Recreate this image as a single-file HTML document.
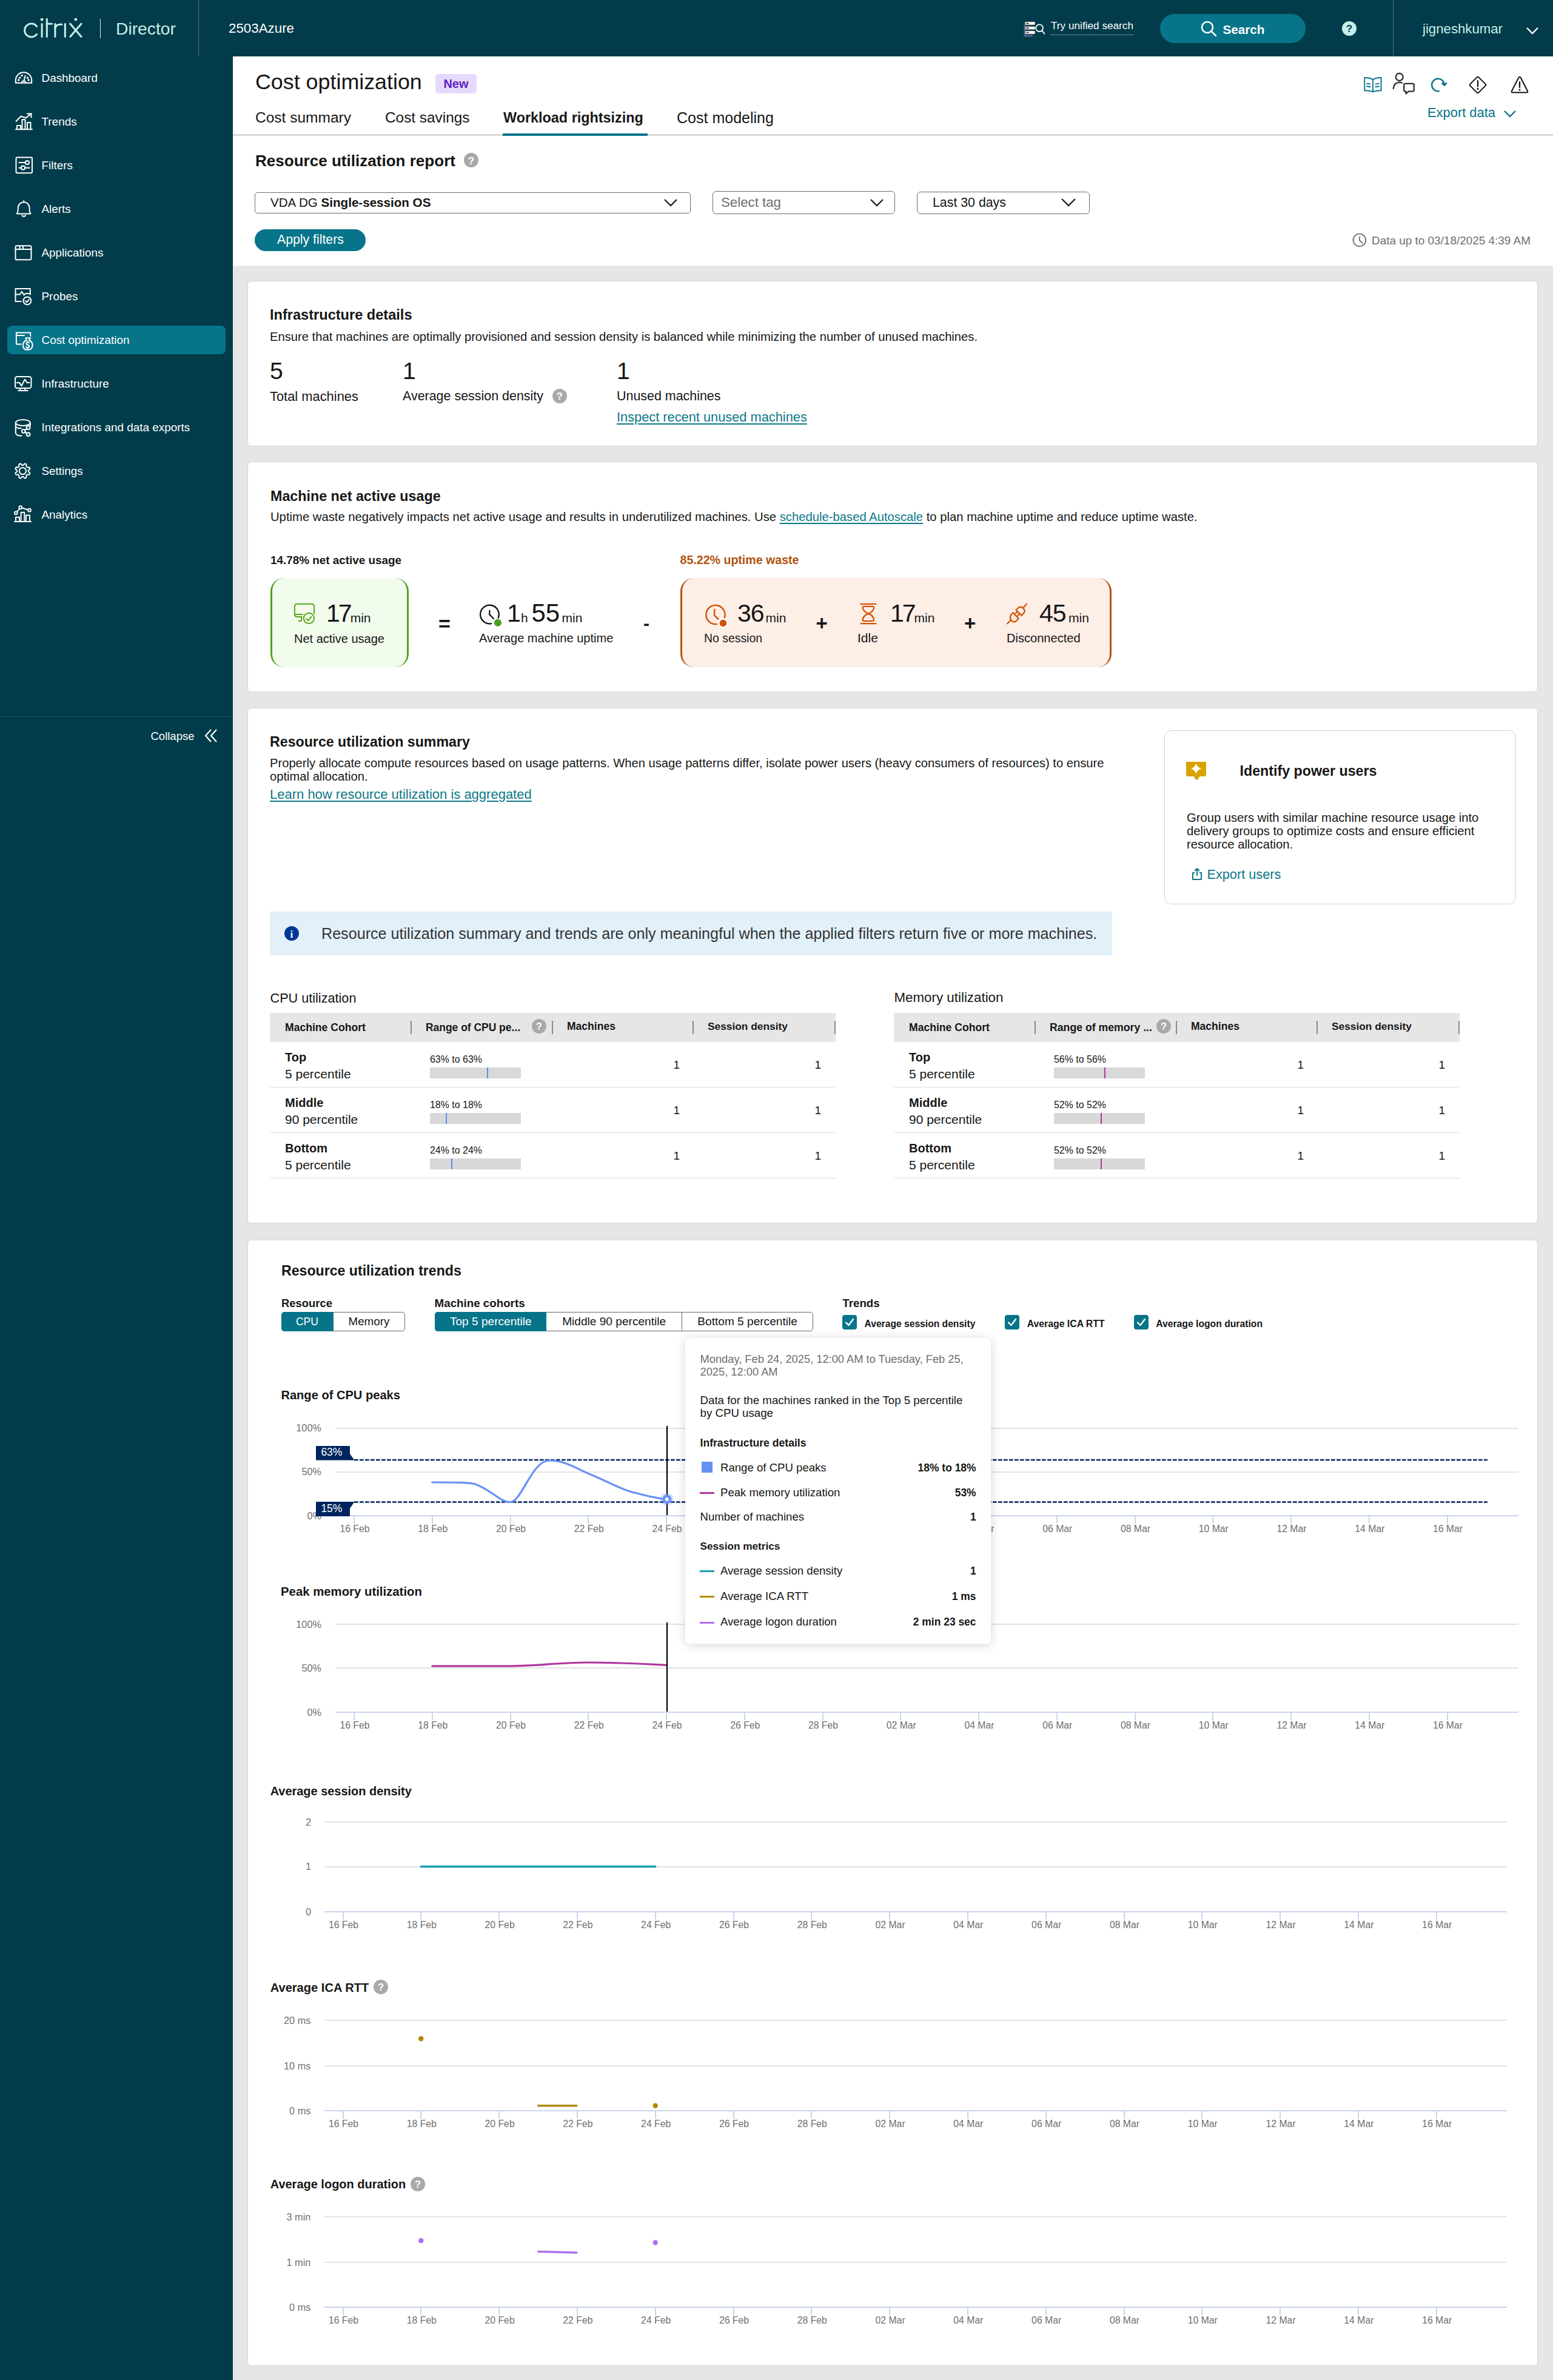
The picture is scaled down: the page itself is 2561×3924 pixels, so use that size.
<!DOCTYPE html>
<html><head><meta charset="utf-8"><title>Cost optimization</title>
<style>
html,body{margin:0;padding:0;}
body{width:2561px;height:3924px;position:relative;overflow:hidden;background:#e6e6e6;font-family:"Liberation Sans",sans-serif;}
.t{position:absolute;white-space:nowrap;line-height:1;}
.b{position:absolute;box-sizing:border-box;}
svg.b{overflow:visible;}
</style></head><body>
<div class="b" style="left:0.0px;top:0.0px;width:2561.0px;height:93.0px;background:#023c4a"></div>
<svg class="b" style="left:40.0px;top:28.0px;" width="100" height="40" viewBox="0 0 100 40"><g fill="none" stroke="#c6efe9" stroke-width="3" stroke-linecap="round"><path d="M20.6 15.6 A11 11 0 1 0 20.6 28.4"/><path d="M29.1 11.5 V32.4"/><path d="M37.3 3.2 V32.4"/><path d="M37.3 11.3 H45.5"/><path d="M50.9 11.5 V32.4"/><path d="M50.9 19 Q52 11.5 62 12.3"/><path d="M67.3 11.5 V32.4"/><path d="M75.8 11.2 L94 32.4"/><path d="M94 11.2 L75.8 32.4"/></g><circle cx="29.1" cy="4.2" r="2.4" fill="#c6efe9"/><circle cx="84.9" cy="4.2" r="2.4" fill="#c6efe9"/></svg>
<div class="b" style="left:164.8px;top:31.0px;width:1.6px;height:32.0px;background:#c6efe9"></div>
<div class="t " style="left:191.0px;top:32.8px;font-size:28.28px;font-weight:400;color:#c6efe9;">Director</div>
<div class="b" style="left:327.0px;top:0.0px;width:1.0px;height:93.0px;background:#4c6f78"></div>
<div class="t " style="left:377.0px;top:35.6px;font-size:22.33px;font-weight:400;color:#ffffff;">2503Azure</div>
<svg class="b" style="left:1688.0px;top:33.0px;" width="38" height="28" viewBox="0 0 38 28"><path d="M0.5 4.5 H3 V24.5 H15 V27.5 H0.5 Z" fill="#56689a"/><g fill="#fff" stroke="#1a1a1a" stroke-width="0.6"><rect x="2.3" y="2.8" width="16.8" height="5.4" rx="1.2"/><rect x="2.3" y="10.4" width="16.8" height="5.4" rx="1.2"/><rect x="2.3" y="17.8" width="16.8" height="5.4" rx="1.2"/></g><g fill="#111"><rect x="4.2" y="4.7" width="4.5" height="1.6" rx="0.8"/><rect x="4.2" y="12.3" width="4.5" height="1.6" rx="0.8"/><rect x="4.2" y="19.7" width="4.5" height="1.6" rx="0.8"/></g><g fill="none" stroke="#fff" stroke-width="1.8"><circle cx="26.1" cy="13.2" r="5.8"/><path d="M30.2 17.4 L34.6 22.9" stroke-linecap="round"/></g></svg>
<div class="t " style="left:1733.0px;top:33.9px;font-size:17.19px;font-weight:400;color:#ffffff;">Try unified search</div>
<div class="b" style="left:1733.0px;top:56.0px;width:136.0px;height:2.0px;border-bottom:1.5px dotted #c9d6da"></div>
<div class="b" style="left:1913.0px;top:23.0px;width:240.0px;height:48.0px;background:#077489;border-radius:24px"></div>
<svg class="b" style="left:1980.0px;top:34.0px;" width="28" height="28" viewBox="0 0 28 28"><g fill="none" stroke="#fff" stroke-width="2.6"><circle cx="11" cy="11" r="9"/><path d="M17.5 17.5 L25 25" stroke-linecap="round"/></g></svg>
<div class="t " style="left:2016.5px;top:38.5px;font-size:20.69px;font-weight:700;color:#ffffff;">Search</div>
<div class="b" style="left:2213.0px;top:35.0px;width:24.0px;height:24.0px;background:#c6efe9;border-radius:50%"></div>
<div class="t " style="left:2219.8px;top:39.1px;font-size:17.00px;font-weight:700;color:#023c4a;">?</div>
<div class="b" style="left:2297.0px;top:0.0px;width:1.0px;height:93.0px;background:#4c6f78"></div>
<div class="t " style="left:2346.0px;top:36.7px;font-size:22.19px;font-weight:400;color:#c6efe9;">jigneshkumar</div>
<svg class="b" style="left:2516.0px;top:44.0px;" width="22" height="14" viewBox="0 0 22 14"><path d="M2 2 L11 11 L20 2" fill="none" stroke="#fff" stroke-width="2.4"/></svg>
<div class="b" style="left:0.0px;top:93.0px;width:384.0px;height:3831.0px;background:#023c4a"></div>
<div class="b" style="left:12.0px;top:537.0px;width:360.0px;height:47.0px;background:#077489;border-radius:8px"></div>
<svg class="b" style="left:24.0px;top:114.0px;" width="30" height="30" viewBox="0 0 30 30"><g fill="none" stroke="#fff" stroke-width="2" stroke-linecap="round" stroke-linejoin="round"><path d="M1.8 22.8 V18.5 A13.2 13.2 0 0 1 28.2 18.5 V22.8 Z"/><path d="M15.2 20 L17.6 10.7"/><path d="M11.8 22.8 A3.4 3.4 0 0 1 18.6 22.8"/></g><g fill="#fff"><circle cx="6.6" cy="18" r="1.7"/><circle cx="8.6" cy="14.2" r="1.7"/><circle cx="12.1" cy="10.5" r="1.7"/><circle cx="21.3" cy="14.2" r="1.7"/><circle cx="23.1" cy="18" r="1.7"/></g></svg>
<div class="t " style="left:68.5px;top:120.3px;font-size:18.90px;font-weight:400;color:#ffffff;">Dashboard</div>
<svg class="b" style="left:24.0px;top:186.0px;" width="30" height="30" viewBox="0 0 30 30"><g fill="none" stroke="#fff" stroke-width="2" stroke-linecap="round" stroke-linejoin="round"><path d="M2 27.2 H28.9"/><path d="M4 26.5 V21 H10 V26.5"/><path d="M12.5 26.5 V11.2 H17.5 V26.5"/><path d="M21 26.5 V16.1 H26.5 V26.5"/><path d="M2.5 14 L10.5 5.8 L18.9 8.3 L27.3 1.6"/><path d="M21 1.6 H27.5 V7.5"/></g></svg>
<div class="t " style="left:68.5px;top:192.3px;font-size:18.90px;font-weight:400;color:#ffffff;">Trends</div>
<svg class="b" style="left:24.0px;top:258.0px;" width="30" height="30" viewBox="0 0 30 30"><g fill="none" stroke="#fff" stroke-width="2" stroke-linecap="round" stroke-linejoin="round"><rect x="2.5" y="1.5" width="26.5" height="25.8" rx="1.8"/><path d="M7.4 10.1 H17.6"/><path d="M7.4 18.7 H10.7 M17.3 18.7 H24.6"/></g><g fill="none" stroke="#fff" stroke-width="2"><circle cx="20.9" cy="10.1" r="3.1"/><circle cx="14" cy="18.7" r="3.1"/></g></svg>
<div class="t " style="left:68.5px;top:264.3px;font-size:18.90px;font-weight:400;color:#ffffff;">Filters</div>
<svg class="b" style="left:24.0px;top:330.0px;" width="30" height="30" viewBox="0 0 30 30"><g fill="none" stroke="#fff" stroke-width="2" stroke-linecap="round" stroke-linejoin="round"><path d="M3.9 22.4 Q6 19 5.8 14.6 V12.6 A9.4 9.4 0 0 1 24.6 12.6 V14.6 Q24.4 19 26.5 22.4 Z"/><path d="M15.2 1.2 V3.2"/><path d="M12.3 25.2 Q15.2 28.3 18.1 25.2"/></g></svg>
<div class="t " style="left:68.5px;top:336.3px;font-size:18.90px;font-weight:400;color:#ffffff;">Alerts</div>
<svg class="b" style="left:24.0px;top:402.0px;" width="30" height="30" viewBox="0 0 30 30"><g fill="none" stroke="#fff" stroke-width="2" stroke-linecap="round" stroke-linejoin="round"><rect x="1.5" y="3.2" width="26" height="23" rx="2"/><path d="M1.5 9 H27.5"/><path d="M8.6 3.5 V9 M14 3.5 V9"/></g></svg>
<div class="t " style="left:68.5px;top:408.3px;font-size:18.90px;font-weight:400;color:#ffffff;">Applications</div>
<svg class="b" style="left:24.0px;top:474.0px;" width="30" height="30" viewBox="0 0 30 30"><g fill="none" stroke="#fff" stroke-width="2" stroke-linecap="round" stroke-linejoin="round"><path d="M10.7 23 H1.5 V2.1 H25.8 V11.6"/><path d="M1.8 11.6 H8.6 L11.9 6.7 L15.6 12.4 L18 9.9 H25.8"/><circle cx="20.9" cy="21.8" r="6.4"/><path d="M18 22 L20.2 24.2 L24 19.8"/></g></svg>
<div class="t " style="left:68.5px;top:480.3px;font-size:18.90px;font-weight:400;color:#ffffff;">Probes</div>
<svg class="b" style="left:24.0px;top:546.0px;" width="30" height="30" viewBox="0 0 30 30"><g fill="none" stroke="#fff" stroke-width="2" stroke-linecap="round" stroke-linejoin="round"><path d="M26.2 7.9 V2.5 H2.9 V21.4 H10.7"/><path d="M2.9 7 H16"/><path d="M18.4 11.2 H26.4 L23.8 14.5 Q30 17.8 29.6 23.6 Q29 30.8 21.7 30.8 Q14.2 30.8 13.8 23.6 Q13.6 17.8 19.6 14.5 Z"/><path d="M24 19.2 Q22.6 17.9 21 18.2 Q19.3 18.7 19.4 20.5 Q19.6 22 21.7 22.7 Q24.1 23.5 24 25.3 Q23.8 27.1 21.6 27.1 Q19.9 27 19 25.8"/><path d="M21.7 16.6 V18.2 M21.7 27.1 V28.7"/></g></svg>
<div class="t " style="left:68.5px;top:552.3px;font-size:18.90px;font-weight:400;color:#ffffff;">Cost optimization</div>
<svg class="b" style="left:24.0px;top:618.0px;" width="30" height="30" viewBox="0 0 30 30"><g fill="none" stroke="#fff" stroke-width="2" stroke-linecap="round" stroke-linejoin="round"><rect x="1" y="3" width="26.5" height="19" rx="3.5"/><path d="M3.7 12.9 H8 L11.5 18.2 L16.8 7.6 L20.7 12.9 H24.5"/><path d="M9.4 22.5 V26 M17.2 22.5 V26 M6.2 26 H21.7"/></g></svg>
<div class="t " style="left:68.5px;top:624.3px;font-size:18.90px;font-weight:400;color:#ffffff;">Infrastructure</div>
<svg class="b" style="left:24.0px;top:690.0px;" width="30" height="30" viewBox="0 0 30 30"><g fill="none" stroke="#fff" stroke-width="2" stroke-linecap="round" stroke-linejoin="round"><ellipse cx="13.8" cy="6.9" rx="12" ry="5"/><path d="M1.8 6.9 V23.6 Q1.8 28.6 11.5 28.6"/><path d="M25.8 6.9 V12"/><path d="M1.8 12 Q1.8 16.3 10.7 16.3"/><path d="M17.2 19.6 L20.3 16.4 M17.2 22 L20.3 24.9"/></g><g fill="none" stroke="#fff" stroke-width="2"><circle cx="22.6" cy="15.1" r="2.9"/><circle cx="14.8" cy="20.8" r="2.9"/><circle cx="22.6" cy="26.1" r="2.9"/></g></svg>
<div class="t " style="left:68.5px;top:696.3px;font-size:18.90px;font-weight:400;color:#ffffff;">Integrations and data exports</div>
<svg class="b" style="left:24.0px;top:762.0px;" width="30" height="30" viewBox="0 0 30 30"><g fill="none" stroke="#fff" stroke-width="2" stroke-linecap="round" stroke-linejoin="round"><path d="M22.80 14.50 L22.80 14.13 L22.82 13.76 L22.92 13.37 L23.31 12.93 L24.19 12.35 L25.04 11.71 L25.34 11.13 L25.33 10.62 L25.21 10.14 L25.04 9.68 L24.83 9.23 L24.58 8.80 L24.23 8.44 L23.61 8.25 L22.55 8.39 L21.51 8.60 L20.93 8.56 L20.59 8.36 L20.31 8.11 L20.05 7.85 L19.79 7.59 L19.54 7.31 L19.34 6.97 L19.30 6.39 L19.51 5.35 L19.65 4.29 L19.46 3.67 L19.10 3.32 L18.67 3.07 L18.22 2.86 L17.76 2.69 L17.28 2.57 L16.77 2.56 L16.19 2.86 L15.55 3.71 L14.97 4.59 L14.53 4.98 L14.14 5.08 L13.77 5.10 L13.40 5.10 L13.03 5.10 L12.66 5.08 L12.27 4.98 L11.83 4.59 L11.25 3.71 L10.61 2.86 L10.03 2.56 L9.52 2.57 L9.04 2.69 L8.58 2.86 L8.13 3.07 L7.70 3.32 L7.34 3.67 L7.15 4.29 L7.29 5.35 L7.50 6.39 L7.46 6.97 L7.26 7.31 L7.01 7.59 L6.75 7.85 L6.49 8.11 L6.21 8.36 L5.87 8.56 L5.29 8.60 L4.25 8.39 L3.19 8.25 L2.57 8.44 L2.22 8.80 L1.97 9.23 L1.76 9.68 L1.59 10.14 L1.47 10.62 L1.46 11.13 L1.76 11.71 L2.61 12.35 L3.49 12.93 L3.88 13.37 L3.98 13.76 L4.00 14.13 L4.00 14.50 L4.00 14.87 L3.98 15.24 L3.88 15.63 L3.49 16.07 L2.61 16.65 L1.76 17.29 L1.46 17.87 L1.47 18.38 L1.59 18.86 L1.76 19.32 L1.97 19.77 L2.22 20.20 L2.57 20.56 L3.19 20.75 L4.25 20.61 L5.29 20.40 L5.87 20.44 L6.21 20.64 L6.49 20.89 L6.75 21.15 L7.01 21.41 L7.26 21.69 L7.46 22.03 L7.50 22.61 L7.29 23.65 L7.15 24.71 L7.34 25.33 L7.70 25.68 L8.13 25.93 L8.58 26.14 L9.04 26.31 L9.52 26.43 L10.03 26.44 L10.61 26.14 L11.25 25.29 L11.83 24.41 L12.27 24.02 L12.66 23.92 L13.03 23.90 L13.40 23.90 L13.77 23.90 L14.14 23.92 L14.53 24.02 L14.97 24.41 L15.55 25.29 L16.19 26.14 L16.77 26.44 L17.28 26.43 L17.76 26.31 L18.22 26.14 L18.67 25.93 L19.10 25.68 L19.46 25.33 L19.65 24.71 L19.51 23.65 L19.30 22.61 L19.34 22.03 L19.54 21.69 L19.79 21.41 L20.05 21.15 L20.31 20.89 L20.59 20.64 L20.93 20.44 L21.51 20.40 L22.55 20.61 L23.61 20.75 L24.23 20.56 L24.58 20.20 L24.83 19.77 L25.04 19.32 L25.21 18.86 L25.33 18.38 L25.34 17.87 L25.04 17.29 L24.19 16.65 L23.31 16.07 L22.92 15.63 L22.82 15.24 L22.80 14.87 Z"/><circle cx="13.4" cy="14.5" r="5.6"/></g></svg>
<div class="t " style="left:68.5px;top:768.3px;font-size:18.90px;font-weight:400;color:#ffffff;">Settings</div>
<svg class="b" style="left:24.0px;top:834.0px;" width="30" height="30" viewBox="0 0 30 30"><g fill="none" stroke="#fff" stroke-width="2" stroke-linecap="round" stroke-linejoin="round"><path d="M-0.2 25.9 H27"/><path d="M2 25.5 V18.8 H8 V25.5"/><path d="M10.6 25.5 V10.8 H16.3 V25.5"/><path d="M19 25.5 V15.5 H25 V25.5"/><path d="M2.3 11.8 L9.9 2.7 L24.5 7.2"/></g><g fill="#023c4a" stroke="#fff" stroke-width="2"><circle cx="2.3" cy="11.8" r="2.4"/><circle cx="9.9" cy="2.7" r="2.4"/><circle cx="24.5" cy="7.2" r="2.4"/></g></svg>
<div class="t " style="left:68.5px;top:840.3px;font-size:18.90px;font-weight:400;color:#ffffff;">Analytics</div>
<div class="b" style="left:0.0px;top:1180.5px;width:384.0px;height:1.5px;background:#0b5665"></div>
<div class="t " style="left:248.5px;top:1204.8px;font-size:18.50px;font-weight:400;color:#ffffff;">Collapse</div>
<svg class="b" style="left:337.0px;top:1201.0px;" width="22" height="24" viewBox="0 0 22 24"><g fill="none" stroke="#fff" stroke-width="2.2"><path d="M11 2 L2 12 L11 22"/><path d="M20 2 L11 12 L20 22"/></g></svg>
<div class="b" style="left:384.0px;top:93.0px;width:2177.0px;height:345.0px;background:#fff"></div>
<div class="t " style="left:421.0px;top:117.6px;font-size:35.85px;font-weight:400;color:#161616;">Cost optimization</div>
<div class="b" style="left:718.0px;top:122.0px;width:68.0px;height:32.0px;background:#e6dafc;border-radius:5px"></div>
<div class="t " style="left:731.4px;top:128.1px;font-size:20.00px;font-weight:700;color:#5f1fc4;">New</div>
<div class="b" style="left:384.0px;top:221.0px;width:2177.0px;height:3.0px;background:#d9d9d9"></div>
<div class="t " style="left:421.0px;top:182.2px;font-size:24.51px;font-weight:400;color:#161616;">Cost summary</div>
<div class="t " style="left:635.0px;top:182.4px;font-size:24.37px;font-weight:400;color:#161616;">Cost savings</div>
<div class="t " style="left:830.0px;top:183.2px;font-size:23.40px;font-weight:700;color:#161616;">Workload rightsizing</div>
<div class="t " style="left:1116.0px;top:181.8px;font-size:25.03px;font-weight:400;color:#161616;">Cost modeling</div>
<div class="b" style="left:829.0px;top:220.0px;width:239.0px;height:4.0px;background:#077489"></div>
<svg class="b" style="left:2249.0px;top:126.0px;" width="30" height="28" viewBox="0 0 30 28"><g fill="none" stroke="#077489" stroke-width="1.9" stroke-linejoin="round" stroke-linecap="round"><path d="M1.3 2 Q8 1.6 15 4.8 Q22 1.6 28.6 2 V23.2 Q22 23 15 25.2 Q8 23 1.3 23.2 Z"/><path d="M15 4.8 V25.2"/><path d="M4.9 11.6 L10.6 12.6 M4.9 16.3 L10.6 17.3 M19.4 12.6 L25.1 11.6 M19.4 17.3 L25.1 16.3"/></g></svg>
<svg class="b" style="left:2295.0px;top:119.0px;" width="40" height="38" viewBox="0 0 40 38"><g fill="none" stroke="#2e2e2e" stroke-width="2.3" stroke-linejoin="round" stroke-linecap="round"><circle cx="12.7" cy="8" r="6"/><path d="M2.7 27 Q4 16.8 13 16.8 Q16 16.8 17.1 17.5"/><path d="M22.2 18.8 H34.7 Q36.7 18.8 36.7 20.8 V29.7 Q36.7 31.7 34.7 31.7 H28 L23.5 35.3 V31.7 Q20.2 31.7 20.2 29.7 V20.8 Q20.2 18.8 22.2 18.8 Z"/></g></svg>
<svg class="b" style="left:2360.0px;top:128.0px;" width="28" height="25" viewBox="0 0 28 25"><g fill="none" stroke="#077489" stroke-width="2.4" stroke-linecap="round" stroke-linejoin="round"><path d="M13 22.2 A10.3 10.3 0 1 1 21.7 11.8"/><path d="M18.2 9.2 L21.7 12.8 L25.2 9.2"/></g></svg>
<svg class="b" style="left:2422.0px;top:125.0px;" width="30" height="30" viewBox="0 0 30 30"><g fill="none" stroke="#111" stroke-width="2" stroke-linejoin="round"><path d="M13.6 2.4 Q15 1 16.4 2.4 L27.6 13.6 Q29 15 27.6 16.4 L16.4 27.6 Q15 29 13.6 27.6 L2.4 16.4 Q1 15 2.4 13.6 Z"/></g><path d="M15 8 V17.5" stroke="#111" stroke-width="2.2" stroke-linecap="round"/><circle cx="15" cy="21.6" r="1.5" fill="#111"/></svg>
<svg class="b" style="left:2491.0px;top:125.0px;" width="30" height="30" viewBox="0 0 30 30"><g fill="none" stroke="#111" stroke-width="2" stroke-linejoin="round"><path d="M13.3 3 Q15 0.5 16.7 3 L28 25 Q29 27.6 26.2 27.6 H3.8 Q1 27.6 2 25 Z"/></g><path d="M15 10 V19" stroke="#111" stroke-width="2.2" stroke-linecap="round"/><circle cx="15" cy="23" r="1.5" fill="#111"/></svg>
<div class="t " style="left:2354.0px;top:174.5px;font-size:21.90px;font-weight:400;color:#077489;">Export data</div>
<svg class="b" style="left:2479.0px;top:181.0px;" width="22" height="13" viewBox="0 0 22 13"><path d="M2 2 L11 11 L20 2" fill="none" stroke="#077489" stroke-width="2.4"/></svg>
<div class="t " style="left:421.0px;top:251.9px;font-size:26.05px;font-weight:700;color:#161616;">Resource utilization report</div>
<div class="b" style="left:765.0px;top:252.0px;width:24.0px;height:24.0px;background:#a8a8a8;border-radius:50%"></div>
<div class="t " style="left:771.8px;top:256.6px;font-size:17.00px;font-weight:700;color:#fff;">?</div>
<div class="b" style="left:420.0px;top:317.0px;width:719.0px;height:35.0px;border:1.5px solid #6e6e6e;border-radius:5px;background:#fff"></div>
<div class="t" style="left:446px;top:323.6px;font-size:20.6px;color:#161616">VDA DG <b style="font-weight:700">Single-session OS</b></div>
<svg class="b" style="left:1094.0px;top:327.0px;" width="24" height="14" viewBox="0 0 24 14"><path d="M2 2 L12 12 L22 2" fill="none" stroke="#222" stroke-width="2.4"/></svg>
<div class="b" style="left:1175.0px;top:315.0px;width:301.0px;height:38.0px;border:1.5px solid #6e6e6e;border-radius:6px;background:#fff"></div>
<div class="t " style="left:1189.0px;top:323.2px;font-size:22.26px;font-weight:400;color:#6f6f6f;">Select tag</div>
<svg class="b" style="left:1434.0px;top:327.0px;" width="24" height="14" viewBox="0 0 24 14"><path d="M2 2 L12 12 L22 2" fill="none" stroke="#222" stroke-width="2.4"/></svg>
<div class="b" style="left:1512.0px;top:316.0px;width:285.0px;height:37.0px;border:1.5px solid #6e6e6e;border-radius:6px;background:#fff"></div>
<div class="t " style="left:1538.0px;top:323.9px;font-size:21.34px;font-weight:400;color:#161616;">Last 30 days</div>
<svg class="b" style="left:1749.0px;top:326.0px;" width="26" height="15" viewBox="0 0 26 15"><path d="M2 2 L13 13 L24 2" fill="none" stroke="#222" stroke-width="2.4"/></svg>
<div class="b" style="left:420.0px;top:378.0px;width:183.0px;height:36.0px;background:#077489;border-radius:18px"></div>
<div class="t " style="left:457.0px;top:385.0px;font-size:21.28px;font-weight:400;color:#fff;">Apply filters</div>
<svg class="b" style="left:2229.0px;top:384.0px;" width="26" height="26" viewBox="0 0 26 26"><g fill="none" stroke="#737373" stroke-width="1.9" stroke-linecap="round"><circle cx="12.9" cy="11.9" r="10.3"/><path d="M12.9 6.6 V12 L17.7 16.9"/></g></svg>
<div class="t " style="left:2262.0px;top:388.0px;font-size:18.93px;font-weight:400;color:#6f6f6f;">Data up to 03/18/2025 4:39 AM</div>
<div class="b" style="left:408.0px;top:463.0px;width:2128.0px;height:273.0px;background:#fff;border:1px solid #d6d6d6;border-radius:6px"></div>
<div class="t " style="left:445.0px;top:507.6px;font-size:23.58px;font-weight:700;color:#161616;">Infrastructure details</div>
<div class="t " style="left:445.0px;top:544.6px;font-size:20.21px;font-weight:400;color:#161616;">Ensure that machines are optimally provisioned and session density is balanced while minimizing the number of unused machines.</div>
<div class="t " style="left:445.0px;top:592.0px;font-size:39.00px;font-weight:400;color:#161616;">5</div>
<div class="t " style="left:445.0px;top:643.0px;font-size:21.89px;font-weight:400;color:#161616;">Total machines</div>
<div class="t " style="left:664.0px;top:592.0px;font-size:39.00px;font-weight:400;color:#161616;">1</div>
<div class="t " style="left:664.0px;top:643.3px;font-size:21.44px;font-weight:400;color:#161616;">Average session density</div>
<div class="t " style="left:1017.0px;top:592.0px;font-size:39.00px;font-weight:400;color:#161616;">1</div>
<div class="t " style="left:1017.0px;top:643.4px;font-size:21.43px;font-weight:400;color:#161616;">Unused machines</div>
<div class="b" style="left:910.7px;top:641.0px;width:24.0px;height:24.0px;background:#a9a9a9;border-radius:50%"></div>
<div class="t " style="left:917.7px;top:645.0px;font-size:16.50px;font-weight:700;color:#fff;">?</div>
<div class="t " style="left:1017.0px;top:676.5px;font-size:21.81px;font-weight:400;color:#0d7888;text-decoration:underline;text-underline-offset:3px">Inspect recent unused machines</div>
<div class="b" style="left:408.0px;top:761.0px;width:2128.0px;height:380.0px;background:#fff;border:1px solid #d6d6d6;border-radius:6px"></div>
<div class="t " style="left:446.0px;top:806.9px;font-size:23.27px;font-weight:700;color:#161616;">Machine net active usage</div>
<div class="t" style="left:446px;top:842.4px;font-size:20.25px;color:#161616">Uptime waste negatively impacts net active usage and results in underutilized machines. Use <span style="color:#0d7888;text-decoration:underline;text-underline-offset:3px">schedule-based Autoscale</span> to plan machine uptime and reduce uptime waste.</div>
<div class="t " style="left:446.0px;top:914.6px;font-size:18.86px;font-weight:700;color:#161616;">14.78% net active usage</div>
<div class="t " style="left:1121.6px;top:914.0px;font-size:19.59px;font-weight:700;color:#b0520f;">85.22% uptime waste</div>
<div class="b" style="left:446.0px;top:953.0px;width:227.5px;height:146.5px;background:#f1fcec;border-left:3px solid #52a01f;border-right:3px solid #52a01f;border-radius:22px"></div>
<div class="b" style="left:1121.5px;top:953.0px;width:711.0px;height:146.5px;background:#fdeee6;border-left:3px solid #b4530f;border-right:3px solid #b4530f;border-radius:22px"></div>
<svg class="b" style="left:484.0px;top:994.0px;" width="36" height="36" viewBox="0 0 36 36"><g fill="none" stroke="#57a815" stroke-width="2" stroke-linecap="round" stroke-linejoin="round"><path d="M34.1 17.2 V6 Q34.1 1.7 29.8 1.7 H6.2 Q1.9 1.7 1.9 6 V18.8 Q1.9 23.1 6.2 23.1 H13.6 L12.8 29.7 H8.8"/><path d="M1.9 19 H15.2"/><circle cx="25.4" cy="25.4" r="8.6"/><path d="M21 26.2 L24.3 29.1 L29.6 22.7"/></g></svg>
<div class="t " style="left:538.0px;top:991.3px;font-size:41.00px;font-weight:400;color:#161616;letter-spacing:-3px">17</div>
<div class="t " style="left:577.7px;top:1008.2px;font-size:21.00px;font-weight:400;color:#161616;">min</div>
<div class="t " style="left:485.0px;top:1042.5px;font-size:20.00px;font-weight:400;color:#161616;">Net active usage</div>
<div class="t " style="left:723.0px;top:1011.2px;font-size:34.00px;font-weight:700;color:#161616;">=</div>
<svg class="b" style="left:789.0px;top:995.0px;" width="40" height="40" viewBox="0 0 40 40"><g fill="none" stroke="#111" stroke-width="2.3" stroke-linecap="round"><path d="M21.06 33.07 A15.3 15.3 0 1 1 32.59 23.73"/><path d="M18.4 12.0 L18.2 18.0 L25.0 25.0"/></g><circle cx="31.9" cy="31.8" r="6" fill="#4c9c16"/></svg>
<div class="t " style="left:836.0px;top:991.3px;font-size:41.00px;font-weight:400;color:#161616;">1</div>
<div class="t " style="left:859.0px;top:1008.2px;font-size:21.00px;font-weight:400;color:#161616;">h</div>
<div class="t " style="left:876.5px;top:990.4px;font-size:42.00px;font-weight:400;color:#161616;">55</div>
<div class="t " style="left:926.5px;top:1008.2px;font-size:21.00px;font-weight:400;color:#161616;">min</div>
<div class="t " style="left:790.0px;top:1042.4px;font-size:20.06px;font-weight:400;color:#161616;">Average machine uptime</div>
<div class="t " style="left:1061.0px;top:1012.6px;font-size:30.00px;font-weight:700;color:#161616;">-</div>
<svg class="b" style="left:1159.5px;top:994.5px;" width="42" height="42" viewBox="0 0 42 42"><g fill="none" stroke="#d05508" stroke-width="2.4" stroke-linecap="round"><path d="M22 34 A15.6 15.6 0 1 1 34.6 24"/><path d="M18.3 10 L18 19.4 L24.5 25.8"/></g><circle cx="32.4" cy="32.4" r="7.2" fill="#d05508" stroke="#fff" stroke-width="2.6"/></svg>
<div class="t " style="left:1216.0px;top:991.3px;font-size:41.00px;font-weight:400;color:#161616;letter-spacing:-1px">36</div>
<div class="t " style="left:1262.5px;top:1008.2px;font-size:21.00px;font-weight:400;color:#161616;">min</div>
<div class="t " style="left:1161.0px;top:1042.6px;font-size:19.41px;font-weight:400;color:#161616;">No session</div>
<div class="t " style="left:1345.4px;top:1011.1px;font-size:33.00px;font-weight:700;color:#161616;">+</div>
<svg class="b" style="left:1417.0px;top:993.0px;" width="30" height="38" viewBox="0 0 30 38"><g fill="none" stroke="#d05508" stroke-width="2.3" stroke-linecap="round" stroke-linejoin="round"><path d="M2.5 2.8 H27.5 M2.5 35.1 H27.5"/><path d="M7.8 6.9 H21.9 Q24.8 6.9 24 9.8 Q22.5 16 15 18.7 Q22.5 21.4 24 27.9 Q24.8 30.8 21.9 30.8 H7.8 Q5 30.8 5.8 27.9 Q7.5 21.4 15 18.7 Q7.5 16 5.8 9.8 Q5 6.9 7.8 6.9 Z"/></g></svg>
<div class="t " style="left:1468.0px;top:991.3px;font-size:41.00px;font-weight:400;color:#161616;letter-spacing:-3px">17</div>
<div class="t " style="left:1507.5px;top:1008.2px;font-size:21.00px;font-weight:400;color:#161616;">min</div>
<div class="t " style="left:1414.0px;top:1041.1px;font-size:21.09px;font-weight:400;color:#161616;">Idle</div>
<div class="t " style="left:1589.9px;top:1011.1px;font-size:33.00px;font-weight:700;color:#161616;">+</div>
<svg class="b" style="left:1659.0px;top:994.0px;" width="36" height="36" viewBox="0 0 36 36"><g fill="none" stroke="#d05508" stroke-width="2.3" stroke-linecap="round" stroke-linejoin="round"><path d="M2 34.3 L8.6 27.7"/><path d="M27.9 8.6 L33.9 1.8"/><path d="M11.3 16.1 L20.8 25.8 L16.8 29.8 Q13.3 32.8 10 30.2 L8.3 28.5 Q5.5 25 7.8 20.6 Z"/><path d="M16.5 11.5 L25.4 20.8 L29.2 17 Q31.8 13.6 29.6 10.2 L27.7 8.2 Q24 5.6 20.6 7.8 Z"/><path d="M18.3 14.6 L15.8 17.1 M22 18.4 L19.5 20.9"/></g></svg>
<div class="t " style="left:1714.0px;top:991.3px;font-size:41.00px;font-weight:400;color:#161616;letter-spacing:-1px">45</div>
<div class="t " style="left:1762.0px;top:1008.2px;font-size:21.00px;font-weight:400;color:#161616;">min</div>
<div class="t " style="left:1660.0px;top:1042.0px;font-size:20.07px;font-weight:400;color:#161616;">Disconnected</div>
<div class="b" style="left:408.0px;top:1167.0px;width:2128.0px;height:850.0px;background:#fff;border:1px solid #d6d6d6;border-radius:6px"></div>
<div class="t " style="left:445.0px;top:1212.4px;font-size:23.20px;font-weight:700;color:#161616;">Resource utilization summary</div>
<div class="t " style="left:445.0px;top:1247.6px;font-size:20.18px;font-weight:400;color:#161616;">Properly allocate compute resources based on usage patterns. When usage patterns differ, isolate power users (heavy consumers of resources) to ensure</div>
<div class="t " style="left:445.0px;top:1270.1px;font-size:20.18px;font-weight:400;color:#161616;">optimal allocation.</div>
<div class="t " style="left:445.0px;top:1299.2px;font-size:22.01px;font-weight:400;color:#0d7888;text-decoration:underline;text-underline-offset:3px">Learn how resource utilization is aggregated</div>
<div class="b" style="left:1919.5px;top:1204.0px;width:580.0px;height:286.5px;border:1.5px solid #cfcfcf;border-radius:12px;background:#fff"></div>
<svg class="b" style="left:1956.0px;top:1256.0px;" width="34" height="32" viewBox="0 0 34 32"><path d="M0 0 H33 V22 Q33 24 31 24 H22.5 L18.5 30 H16.5 L12.5 24 H2 Q0 24 0 22 Z" fill="#d8a300"/><path d="M16.5 2.7 Q18.6 9.2 25 11.3 Q18.6 13.4 16.5 20 Q14.4 13.4 8 11.3 Q14.4 9.2 16.5 2.7 Z" fill="#fff"/></svg>
<div class="t " style="left:2044.5px;top:1260.3px;font-size:23.24px;font-weight:700;color:#161616;">Identify power users</div>
<div class="t " style="left:1957.0px;top:1337.5px;font-size:20.20px;font-weight:400;color:#161616;">Group users with similar machine resource usage into</div>
<div class="t " style="left:1957.0px;top:1359.8px;font-size:20.20px;font-weight:400;color:#161616;">delivery groups to optimize costs and ensure efficient</div>
<div class="t " style="left:1957.0px;top:1382.1px;font-size:20.20px;font-weight:400;color:#161616;">resource allocation.</div>
<svg class="b" style="left:1965.0px;top:1430.0px;" width="18" height="22" viewBox="0 0 18 22"><g fill="none" stroke="#0d7888" stroke-width="2" stroke-linejoin="round"><path d="M5 9 H2 V20 H16 V9 H13"/><path d="M9 14 V2 M5 6 L9 2 L13 6"/></g></svg>
<div class="t " style="left:1990.4px;top:1430.6px;font-size:21.73px;font-weight:400;color:#0d7888;">Export users</div>
<div class="b" style="left:445.0px;top:1503.0px;width:1388.5px;height:72.0px;background:#e2f0fa"></div>
<div class="b" style="left:469.0px;top:1527.0px;width:24.0px;height:24.0px;background:#003796;border-radius:50%"></div>
<div class="t " style="left:478.6px;top:1531.6px;font-size:17.00px;font-weight:700;color:#fff;font-family:'Liberation Serif',serif">i</div>
<div class="t " style="left:530.0px;top:1526.7px;font-size:25.14px;font-weight:400;color:#333333;">Resource utilization summary and trends are only meaningful when the applied filters return five or more machines.</div>
<div class="t " style="left:445.5px;top:1634.7px;font-size:21.65px;font-weight:400;color:#161616;">CPU utilization</div>
<div class="b" style="left:445.0px;top:1670.0px;width:933.0px;height:48.0px;background:#e6e6e6"></div>
<div class="t " style="left:470.0px;top:1686.1px;font-size:17.60px;font-weight:700;color:#161616;">Machine Cohort</div>
<div class="t " style="left:702.0px;top:1686.2px;font-size:17.44px;font-weight:700;color:#161616;">Range of CPU pe...</div>
<div class="b" style="left:876.8px;top:1679.5px;width:24.0px;height:24.0px;background:#a9a9a9;border-radius:50%"></div>
<div class="t " style="left:883.8px;top:1683.5px;font-size:16.50px;font-weight:700;color:#fff;">?</div>
<div class="t " style="left:935.0px;top:1683.6px;font-size:17.55px;font-weight:700;color:#161616;">Machines</div>
<div class="t " style="left:1167.0px;top:1683.8px;font-size:17.34px;font-weight:700;color:#161616;">Session density</div>
<div class="b" style="left:677.0px;top:1683.0px;width:2.0px;height:22.0px;background:#8a8a8a"></div>
<div class="b" style="left:910.0px;top:1683.0px;width:2.0px;height:22.0px;background:#8a8a8a"></div>
<div class="b" style="left:1142.0px;top:1683.0px;width:2.0px;height:22.0px;background:#8a8a8a"></div>
<div class="b" style="left:1376.0px;top:1683.0px;width:2.0px;height:22.0px;background:#8a8a8a"></div>
<div class="t " style="left:470.0px;top:1732.8px;font-size:20.00px;font-weight:700;color:#161616;">Top</div>
<div class="t " style="left:470.0px;top:1760.0px;font-size:21.00px;font-weight:400;color:#161616;">5 percentile</div>
<div class="t " style="left:709.0px;top:1739.1px;font-size:15.95px;font-weight:400;color:#161616;">63% to 63%</div>
<div class="b" style="left:709.0px;top:1760.0px;width:150.0px;height:18.0px;background:#d8d8d8"></div>
<div class="b" style="left:802.5px;top:1760.0px;width:2.0px;height:18.0px;background:#5b8bf0"></div>
<div class="t " style="left:1110.5px;top:1745.9px;font-size:19.00px;font-weight:400;color:#161616;">1</div>
<div class="t " style="left:1343.5px;top:1745.9px;font-size:19.00px;font-weight:400;color:#161616;">1</div>
<div class="b" style="left:445.0px;top:1791.5px;width:933.0px;height:1.0px;background:#dedede"></div>
<div class="t " style="left:470.0px;top:1807.8px;font-size:20.00px;font-weight:700;color:#161616;">Middle</div>
<div class="t " style="left:470.0px;top:1835.0px;font-size:21.00px;font-weight:400;color:#161616;">90 percentile</div>
<div class="t " style="left:709.0px;top:1814.1px;font-size:15.95px;font-weight:400;color:#161616;">18% to 18%</div>
<div class="b" style="left:709.0px;top:1835.0px;width:150.0px;height:18.0px;background:#d8d8d8"></div>
<div class="b" style="left:735.0px;top:1835.0px;width:2.0px;height:18.0px;background:#5b8bf0"></div>
<div class="t " style="left:1110.5px;top:1820.9px;font-size:19.00px;font-weight:400;color:#161616;">1</div>
<div class="t " style="left:1343.5px;top:1820.9px;font-size:19.00px;font-weight:400;color:#161616;">1</div>
<div class="b" style="left:445.0px;top:1866.5px;width:933.0px;height:1.0px;background:#dedede"></div>
<div class="t " style="left:470.0px;top:1882.8px;font-size:20.00px;font-weight:700;color:#161616;">Bottom</div>
<div class="t " style="left:470.0px;top:1910.0px;font-size:21.00px;font-weight:400;color:#161616;">5 percentile</div>
<div class="t " style="left:709.0px;top:1889.1px;font-size:15.95px;font-weight:400;color:#161616;">24% to 24%</div>
<div class="b" style="left:709.0px;top:1910.0px;width:150.0px;height:18.0px;background:#d8d8d8"></div>
<div class="b" style="left:744.0px;top:1910.0px;width:2.0px;height:18.0px;background:#5b8bf0"></div>
<div class="t " style="left:1110.5px;top:1895.9px;font-size:19.00px;font-weight:400;color:#161616;">1</div>
<div class="t " style="left:1343.5px;top:1895.9px;font-size:19.00px;font-weight:400;color:#161616;">1</div>
<div class="b" style="left:445.0px;top:1941.5px;width:933.0px;height:1.0px;background:#dedede"></div>
<div class="t " style="left:1474.5px;top:1634.1px;font-size:22.34px;font-weight:400;color:#161616;">Memory utilization</div>
<div class="b" style="left:1474.0px;top:1670.0px;width:933.0px;height:48.0px;background:#e6e6e6"></div>
<div class="t " style="left:1499.0px;top:1686.1px;font-size:17.60px;font-weight:700;color:#161616;">Machine Cohort</div>
<div class="t " style="left:1731.0px;top:1686.0px;font-size:17.68px;font-weight:700;color:#161616;">Range of memory ...</div>
<div class="b" style="left:1907.0px;top:1679.5px;width:24.0px;height:24.0px;background:#a9a9a9;border-radius:50%"></div>
<div class="t " style="left:1914.0px;top:1683.5px;font-size:16.50px;font-weight:700;color:#fff;">?</div>
<div class="t " style="left:1964.0px;top:1683.6px;font-size:17.55px;font-weight:700;color:#161616;">Machines</div>
<div class="t " style="left:2196.0px;top:1683.8px;font-size:17.34px;font-weight:700;color:#161616;">Session density</div>
<div class="b" style="left:1706.0px;top:1683.0px;width:2.0px;height:22.0px;background:#8a8a8a"></div>
<div class="b" style="left:1939.0px;top:1683.0px;width:2.0px;height:22.0px;background:#8a8a8a"></div>
<div class="b" style="left:2171.0px;top:1683.0px;width:2.0px;height:22.0px;background:#8a8a8a"></div>
<div class="b" style="left:2405.0px;top:1683.0px;width:2.0px;height:22.0px;background:#8a8a8a"></div>
<div class="t " style="left:1499.0px;top:1732.8px;font-size:20.00px;font-weight:700;color:#161616;">Top</div>
<div class="t " style="left:1499.0px;top:1760.0px;font-size:21.00px;font-weight:400;color:#161616;">5 percentile</div>
<div class="t " style="left:1738.0px;top:1739.1px;font-size:15.95px;font-weight:400;color:#161616;">56% to 56%</div>
<div class="b" style="left:1738.0px;top:1760.0px;width:150.0px;height:18.0px;background:#d8d8d8"></div>
<div class="b" style="left:1821.0px;top:1760.0px;width:2.0px;height:18.0px;background:#b0369e"></div>
<div class="t " style="left:2139.5px;top:1745.9px;font-size:19.00px;font-weight:400;color:#161616;">1</div>
<div class="t " style="left:2372.5px;top:1745.9px;font-size:19.00px;font-weight:400;color:#161616;">1</div>
<div class="b" style="left:1474.0px;top:1791.5px;width:933.0px;height:1.0px;background:#dedede"></div>
<div class="t " style="left:1499.0px;top:1807.8px;font-size:20.00px;font-weight:700;color:#161616;">Middle</div>
<div class="t " style="left:1499.0px;top:1835.0px;font-size:21.00px;font-weight:400;color:#161616;">90 percentile</div>
<div class="t " style="left:1738.0px;top:1814.1px;font-size:15.95px;font-weight:400;color:#161616;">52% to 52%</div>
<div class="b" style="left:1738.0px;top:1835.0px;width:150.0px;height:18.0px;background:#d8d8d8"></div>
<div class="b" style="left:1815.0px;top:1835.0px;width:2.0px;height:18.0px;background:#b0369e"></div>
<div class="t " style="left:2139.5px;top:1820.9px;font-size:19.00px;font-weight:400;color:#161616;">1</div>
<div class="t " style="left:2372.5px;top:1820.9px;font-size:19.00px;font-weight:400;color:#161616;">1</div>
<div class="b" style="left:1474.0px;top:1866.5px;width:933.0px;height:1.0px;background:#dedede"></div>
<div class="t " style="left:1499.0px;top:1882.8px;font-size:20.00px;font-weight:700;color:#161616;">Bottom</div>
<div class="t " style="left:1499.0px;top:1910.0px;font-size:21.00px;font-weight:400;color:#161616;">5 percentile</div>
<div class="t " style="left:1738.0px;top:1889.1px;font-size:15.95px;font-weight:400;color:#161616;">52% to 52%</div>
<div class="b" style="left:1738.0px;top:1910.0px;width:150.0px;height:18.0px;background:#d8d8d8"></div>
<div class="b" style="left:1815.0px;top:1910.0px;width:2.0px;height:18.0px;background:#b0369e"></div>
<div class="t " style="left:2139.5px;top:1895.9px;font-size:19.00px;font-weight:400;color:#161616;">1</div>
<div class="t " style="left:2372.5px;top:1895.9px;font-size:19.00px;font-weight:400;color:#161616;">1</div>
<div class="b" style="left:1474.0px;top:1941.5px;width:933.0px;height:1.0px;background:#dedede"></div>
<div class="b" style="left:408.0px;top:2044.0px;width:2128.0px;height:1856.5px;background:#fff;border:1px solid #d6d6d6;border-radius:6px"></div>
<div class="t " style="left:464.0px;top:2084.2px;font-size:23.14px;font-weight:700;color:#161616;">Resource utilization trends</div>
<div class="t " style="left:464.0px;top:2139.9px;font-size:18.43px;font-weight:700;color:#161616;">Resource</div>
<div class="b" style="left:463.5px;top:2163.0px;width:204.0px;height:31.5px;border:1.5px solid #6a6a6a;border-radius:5px;background:#fff;overflow:hidden"></div>
<div class="b" style="left:463.5px;top:2163.0px;width:86.2px;height:31.5px;background:#077489;border-radius:5px 0 0 5px"></div>
<div class="t " style="left:487.9px;top:2170.7px;font-size:17.50px;font-weight:400;color:#fff;">CPU</div>
<div class="t " style="left:574.5px;top:2169.6px;font-size:18.80px;font-weight:400;color:#161616;">Memory</div>
<div class="t " style="left:716.6px;top:2139.6px;font-size:18.75px;font-weight:700;color:#161616;">Machine cohorts</div>
<div class="b" style="left:716.6px;top:2163.0px;width:624.0px;height:31.5px;border:1.5px solid #6a6a6a;border-radius:5px;background:#fff"></div>
<div class="b" style="left:716.6px;top:2163.0px;width:184.7px;height:31.5px;background:#077489;border-radius:5px 0 0 5px"></div>
<div class="b" style="left:1123.5px;top:2163.0px;width:1.5px;height:31.5px;background:#6a6a6a"></div>
<div class="t " style="left:741.9px;top:2169.3px;font-size:19.10px;font-weight:400;color:#fff;">Top 5 percentile</div>
<div class="t " style="left:927.2px;top:2169.3px;font-size:19.10px;font-weight:400;color:#161616;">Middle 90 percentile</div>
<div class="t " style="left:1150.3px;top:2169.3px;font-size:19.10px;font-weight:400;color:#161616;">Bottom 5 percentile</div>
<div class="t " style="left:1389.3px;top:2139.6px;font-size:18.73px;font-weight:700;color:#161616;">Trends</div>
<div class="b" style="left:1389.0px;top:2168.0px;width:24.0px;height:24.0px;background:#077489;border-radius:4px"></div>
<svg class="b" style="left:1389.0px;top:2168.0px;" width="24" height="24" viewBox="0 0 24 24"><path d="M6 12.5 L10.5 17 L18 7" fill="none" stroke="#fff" stroke-width="2.4" stroke-linecap="round" stroke-linejoin="round"/></svg>
<div class="t " style="left:1425.5px;top:2174.7px;font-size:15.65px;font-weight:700;color:#161616;">Average session density</div>
<div class="b" style="left:1657.2px;top:2168.0px;width:24.0px;height:24.0px;background:#077489;border-radius:4px"></div>
<svg class="b" style="left:1657.2px;top:2168.0px;" width="24" height="24" viewBox="0 0 24 24"><path d="M6 12.5 L10.5 17 L18 7" fill="none" stroke="#fff" stroke-width="2.4" stroke-linecap="round" stroke-linejoin="round"/></svg>
<div class="t " style="left:1693.7px;top:2174.6px;font-size:15.81px;font-weight:700;color:#161616;">Average ICA RTT</div>
<div class="b" style="left:1869.7px;top:2168.0px;width:24.0px;height:24.0px;background:#077489;border-radius:4px"></div>
<svg class="b" style="left:1869.7px;top:2168.0px;" width="24" height="24" viewBox="0 0 24 24"><path d="M6 12.5 L10.5 17 L18 7" fill="none" stroke="#fff" stroke-width="2.4" stroke-linecap="round" stroke-linejoin="round"/></svg>
<div class="t " style="left:1906.2px;top:2174.7px;font-size:15.73px;font-weight:700;color:#161616;">Average logon duration</div>
<div class="t " style="left:463.4px;top:2290.3px;font-size:20.10px;font-weight:700;color:#161616;">Range of CPU peaks</div>
<div class="b" style="left:553.0px;top:2353.7px;width:1950.5px;height:2.0px;background:#e3e3e3"></div>
<div class="b" style="left:553.0px;top:2425.7px;width:1950.5px;height:2.0px;background:#e3e3e3"></div>
<div class="b" style="left:553.0px;top:2497.8px;width:1950.5px;height:2.0px;background:#cbd4ec"></div>
<div class="b" style="left:583.0px;top:2498.8px;width:2.0px;height:13.0px;background:#cbd4ec"></div>
<div class="t " style="left:560.4px;top:2512.6px;font-size:15.80px;font-weight:400;color:#6f6f6f;">16 Feb</div>
<div class="b" style="left:711.8px;top:2498.8px;width:2.0px;height:13.0px;background:#cbd4ec"></div>
<div class="t " style="left:689.2px;top:2512.6px;font-size:15.80px;font-weight:400;color:#6f6f6f;">18 Feb</div>
<div class="b" style="left:840.5px;top:2498.8px;width:2.0px;height:13.0px;background:#cbd4ec"></div>
<div class="t " style="left:817.9px;top:2512.6px;font-size:15.80px;font-weight:400;color:#6f6f6f;">20 Feb</div>
<div class="b" style="left:969.2px;top:2498.8px;width:2.0px;height:13.0px;background:#cbd4ec"></div>
<div class="t " style="left:946.7px;top:2512.6px;font-size:15.80px;font-weight:400;color:#6f6f6f;">22 Feb</div>
<div class="b" style="left:1098.0px;top:2498.8px;width:2.0px;height:13.0px;background:#cbd4ec"></div>
<div class="t " style="left:1075.4px;top:2512.6px;font-size:15.80px;font-weight:400;color:#6f6f6f;">24 Feb</div>
<div class="b" style="left:1226.8px;top:2498.8px;width:2.0px;height:13.0px;background:#cbd4ec"></div>
<div class="t " style="left:1204.2px;top:2512.6px;font-size:15.80px;font-weight:400;color:#6f6f6f;">26 Feb</div>
<div class="b" style="left:1355.5px;top:2498.8px;width:2.0px;height:13.0px;background:#cbd4ec"></div>
<div class="t " style="left:1332.9px;top:2512.6px;font-size:15.80px;font-weight:400;color:#6f6f6f;">28 Feb</div>
<div class="b" style="left:1484.2px;top:2498.8px;width:2.0px;height:13.0px;background:#cbd4ec"></div>
<div class="t " style="left:1461.7px;top:2512.6px;font-size:15.80px;font-weight:400;color:#6f6f6f;">02 Mar</div>
<div class="b" style="left:1613.0px;top:2498.8px;width:2.0px;height:13.0px;background:#cbd4ec"></div>
<div class="t " style="left:1590.4px;top:2512.6px;font-size:15.80px;font-weight:400;color:#6f6f6f;">04 Mar</div>
<div class="b" style="left:1741.8px;top:2498.8px;width:2.0px;height:13.0px;background:#cbd4ec"></div>
<div class="t " style="left:1719.2px;top:2512.6px;font-size:15.80px;font-weight:400;color:#6f6f6f;">06 Mar</div>
<div class="b" style="left:1870.5px;top:2498.8px;width:2.0px;height:13.0px;background:#cbd4ec"></div>
<div class="t " style="left:1847.9px;top:2512.6px;font-size:15.80px;font-weight:400;color:#6f6f6f;">08 Mar</div>
<div class="b" style="left:1999.2px;top:2498.8px;width:2.0px;height:13.0px;background:#cbd4ec"></div>
<div class="t " style="left:1976.7px;top:2512.6px;font-size:15.80px;font-weight:400;color:#6f6f6f;">10 Mar</div>
<div class="b" style="left:2128.0px;top:2498.8px;width:2.0px;height:13.0px;background:#cbd4ec"></div>
<div class="t " style="left:2105.4px;top:2512.6px;font-size:15.80px;font-weight:400;color:#6f6f6f;">12 Mar</div>
<div class="b" style="left:2256.8px;top:2498.8px;width:2.0px;height:13.0px;background:#cbd4ec"></div>
<div class="t " style="left:2234.2px;top:2512.6px;font-size:15.80px;font-weight:400;color:#6f6f6f;">14 Mar</div>
<div class="b" style="left:2385.5px;top:2498.8px;width:2.0px;height:13.0px;background:#cbd4ec"></div>
<div class="t " style="left:2362.9px;top:2512.6px;font-size:15.80px;font-weight:400;color:#6f6f6f;">16 Mar</div>
<div class="t " style="left:488.3px;top:2346.4px;font-size:16.30px;font-weight:400;color:#6f6f6f;">100%</div>
<div class="t " style="left:497.4px;top:2418.4px;font-size:16.30px;font-weight:400;color:#6f6f6f;">50%</div>
<div class="t " style="left:506.4px;top:2490.5px;font-size:16.30px;font-weight:400;color:#6f6f6f;">0%</div>
<svg class="b" style="left:0;top:0" width="2561" height="3924" viewBox="0 0 2561 3924"><path d="M584 2407 H2453" stroke="#00255e" stroke-width="2.3" stroke-dasharray="6.7 2.3" fill="none"/><path d="M584 2476.5 H2453" stroke="#00255e" stroke-width="2.3" stroke-dasharray="6.7 2.3" fill="none"/><path d="M521 2384 H577 V2397 L584.5 2407.5 H521 Z" fill="#00255e"/><path d="M521 2500 H577 V2487 L584.5 2476 H521 Z" fill="#00255e"/></svg>
<div class="t " style="left:529.4px;top:2385.5px;font-size:17.50px;font-weight:400;color:#fff;">63%</div>
<div class="t " style="left:529.4px;top:2478.7px;font-size:17.50px;font-weight:400;color:#fff;">15%</div>
<svg class="b" style="left:0;top:0" width="2561" height="3924" viewBox="0 0 2561 3924"><path d="M712.8 2444.0 C751.4 2444.0 770.7 2443.8 783.6 2446.9 C809.3 2455.6 825.4 2477.2 841.5 2476.5 C860.8 2475.7 876.9 2408.0 905.9 2408.0 C931.6 2408.0 950.9 2421.0 970.2 2429.6 C1008.9 2445.5 1028.2 2457.7 1047.5 2461.3 C1066.8 2466.4 1086.1 2470.7 1099.0 2472.1" stroke="#6690f5" stroke-width="3.2" fill="none" stroke-linecap="round"/><path d="M1100 2351 V2498" stroke="#000" stroke-width="2.2"/><circle cx="1099.8" cy="2471.8" r="11" fill="#6690f5" fill-opacity="0.25"/><circle cx="1099.8" cy="2471.8" r="7.5" fill="#6690f5"/><circle cx="1099.8" cy="2471.8" r="3.1" fill="#fff"/></svg>
<div class="t " style="left:463.0px;top:2613.8px;font-size:20.35px;font-weight:700;color:#161616;">Peak memory utilization</div>
<div class="b" style="left:553.0px;top:2677.3px;width:1950.5px;height:2.0px;background:#e3e3e3"></div>
<div class="b" style="left:553.0px;top:2749.4px;width:1950.5px;height:2.0px;background:#e3e3e3"></div>
<div class="b" style="left:553.0px;top:2821.8px;width:1950.5px;height:2.0px;background:#cbd4ec"></div>
<div class="b" style="left:583.0px;top:2822.8px;width:2.0px;height:13.0px;background:#cbd4ec"></div>
<div class="t " style="left:560.4px;top:2837.1px;font-size:15.80px;font-weight:400;color:#6f6f6f;">16 Feb</div>
<div class="b" style="left:711.8px;top:2822.8px;width:2.0px;height:13.0px;background:#cbd4ec"></div>
<div class="t " style="left:689.2px;top:2837.1px;font-size:15.80px;font-weight:400;color:#6f6f6f;">18 Feb</div>
<div class="b" style="left:840.5px;top:2822.8px;width:2.0px;height:13.0px;background:#cbd4ec"></div>
<div class="t " style="left:817.9px;top:2837.1px;font-size:15.80px;font-weight:400;color:#6f6f6f;">20 Feb</div>
<div class="b" style="left:969.2px;top:2822.8px;width:2.0px;height:13.0px;background:#cbd4ec"></div>
<div class="t " style="left:946.7px;top:2837.1px;font-size:15.80px;font-weight:400;color:#6f6f6f;">22 Feb</div>
<div class="b" style="left:1098.0px;top:2822.8px;width:2.0px;height:13.0px;background:#cbd4ec"></div>
<div class="t " style="left:1075.4px;top:2837.1px;font-size:15.80px;font-weight:400;color:#6f6f6f;">24 Feb</div>
<div class="b" style="left:1226.8px;top:2822.8px;width:2.0px;height:13.0px;background:#cbd4ec"></div>
<div class="t " style="left:1204.2px;top:2837.1px;font-size:15.80px;font-weight:400;color:#6f6f6f;">26 Feb</div>
<div class="b" style="left:1355.5px;top:2822.8px;width:2.0px;height:13.0px;background:#cbd4ec"></div>
<div class="t " style="left:1332.9px;top:2837.1px;font-size:15.80px;font-weight:400;color:#6f6f6f;">28 Feb</div>
<div class="b" style="left:1484.2px;top:2822.8px;width:2.0px;height:13.0px;background:#cbd4ec"></div>
<div class="t " style="left:1461.7px;top:2837.1px;font-size:15.80px;font-weight:400;color:#6f6f6f;">02 Mar</div>
<div class="b" style="left:1613.0px;top:2822.8px;width:2.0px;height:13.0px;background:#cbd4ec"></div>
<div class="t " style="left:1590.4px;top:2837.1px;font-size:15.80px;font-weight:400;color:#6f6f6f;">04 Mar</div>
<div class="b" style="left:1741.8px;top:2822.8px;width:2.0px;height:13.0px;background:#cbd4ec"></div>
<div class="t " style="left:1719.2px;top:2837.1px;font-size:15.80px;font-weight:400;color:#6f6f6f;">06 Mar</div>
<div class="b" style="left:1870.5px;top:2822.8px;width:2.0px;height:13.0px;background:#cbd4ec"></div>
<div class="t " style="left:1847.9px;top:2837.1px;font-size:15.80px;font-weight:400;color:#6f6f6f;">08 Mar</div>
<div class="b" style="left:1999.2px;top:2822.8px;width:2.0px;height:13.0px;background:#cbd4ec"></div>
<div class="t " style="left:1976.7px;top:2837.1px;font-size:15.80px;font-weight:400;color:#6f6f6f;">10 Mar</div>
<div class="b" style="left:2128.0px;top:2822.8px;width:2.0px;height:13.0px;background:#cbd4ec"></div>
<div class="t " style="left:2105.4px;top:2837.1px;font-size:15.80px;font-weight:400;color:#6f6f6f;">12 Mar</div>
<div class="b" style="left:2256.8px;top:2822.8px;width:2.0px;height:13.0px;background:#cbd4ec"></div>
<div class="t " style="left:2234.2px;top:2837.1px;font-size:15.80px;font-weight:400;color:#6f6f6f;">14 Mar</div>
<div class="b" style="left:2385.5px;top:2822.8px;width:2.0px;height:13.0px;background:#cbd4ec"></div>
<div class="t " style="left:2362.9px;top:2837.1px;font-size:15.80px;font-weight:400;color:#6f6f6f;">16 Mar</div>
<div class="t " style="left:488.3px;top:2670.0px;font-size:16.30px;font-weight:400;color:#6f6f6f;">100%</div>
<div class="t " style="left:497.4px;top:2742.1px;font-size:16.30px;font-weight:400;color:#6f6f6f;">50%</div>
<div class="t " style="left:506.4px;top:2814.5px;font-size:16.30px;font-weight:400;color:#6f6f6f;">0%</div>
<svg class="b" style="left:0;top:0" width="2561" height="3924" viewBox="0 0 2561 3924"><path d="M712.8 2746.8 L841.5 2746.8 C880.1 2746.8 925.2 2741 970.2 2741 C1021.8 2741 1060.4 2743.5 1099.0 2745.4" stroke="#b0369e" stroke-width="3.2" fill="none" stroke-linecap="round"/><path d="M1100 2675 V2822" stroke="#000" stroke-width="2.2"/></svg>
<div class="t " style="left:445.7px;top:2943.6px;font-size:19.96px;font-weight:700;color:#161616;">Average session density</div>
<div class="b" style="left:535.0px;top:3002.8px;width:1950.3px;height:2.0px;background:#e3e3e3"></div>
<div class="b" style="left:535.0px;top:3076.7px;width:1950.3px;height:2.0px;background:#e3e3e3"></div>
<div class="b" style="left:535.0px;top:3151.0px;width:1950.3px;height:2.0px;background:#cbd4ec"></div>
<div class="b" style="left:564.5px;top:3152.0px;width:2.0px;height:13.0px;background:#cbd4ec"></div>
<div class="t " style="left:541.9px;top:3165.6px;font-size:15.80px;font-weight:400;color:#6f6f6f;">16 Feb</div>
<div class="b" style="left:693.3px;top:3152.0px;width:2.0px;height:13.0px;background:#cbd4ec"></div>
<div class="t " style="left:670.7px;top:3165.6px;font-size:15.80px;font-weight:400;color:#6f6f6f;">18 Feb</div>
<div class="b" style="left:822.1px;top:3152.0px;width:2.0px;height:13.0px;background:#cbd4ec"></div>
<div class="t " style="left:799.5px;top:3165.6px;font-size:15.80px;font-weight:400;color:#6f6f6f;">20 Feb</div>
<div class="b" style="left:950.9px;top:3152.0px;width:2.0px;height:13.0px;background:#cbd4ec"></div>
<div class="t " style="left:928.3px;top:3165.6px;font-size:15.80px;font-weight:400;color:#6f6f6f;">22 Feb</div>
<div class="b" style="left:1079.7px;top:3152.0px;width:2.0px;height:13.0px;background:#cbd4ec"></div>
<div class="t " style="left:1057.1px;top:3165.6px;font-size:15.80px;font-weight:400;color:#6f6f6f;">24 Feb</div>
<div class="b" style="left:1208.5px;top:3152.0px;width:2.0px;height:13.0px;background:#cbd4ec"></div>
<div class="t " style="left:1185.9px;top:3165.6px;font-size:15.80px;font-weight:400;color:#6f6f6f;">26 Feb</div>
<div class="b" style="left:1337.3px;top:3152.0px;width:2.0px;height:13.0px;background:#cbd4ec"></div>
<div class="t " style="left:1314.7px;top:3165.6px;font-size:15.80px;font-weight:400;color:#6f6f6f;">28 Feb</div>
<div class="b" style="left:1466.1px;top:3152.0px;width:2.0px;height:13.0px;background:#cbd4ec"></div>
<div class="t " style="left:1443.5px;top:3165.6px;font-size:15.80px;font-weight:400;color:#6f6f6f;">02 Mar</div>
<div class="b" style="left:1594.9px;top:3152.0px;width:2.0px;height:13.0px;background:#cbd4ec"></div>
<div class="t " style="left:1572.3px;top:3165.6px;font-size:15.80px;font-weight:400;color:#6f6f6f;">04 Mar</div>
<div class="b" style="left:1723.7px;top:3152.0px;width:2.0px;height:13.0px;background:#cbd4ec"></div>
<div class="t " style="left:1701.1px;top:3165.6px;font-size:15.80px;font-weight:400;color:#6f6f6f;">06 Mar</div>
<div class="b" style="left:1852.5px;top:3152.0px;width:2.0px;height:13.0px;background:#cbd4ec"></div>
<div class="t " style="left:1829.9px;top:3165.6px;font-size:15.80px;font-weight:400;color:#6f6f6f;">08 Mar</div>
<div class="b" style="left:1981.3px;top:3152.0px;width:2.0px;height:13.0px;background:#cbd4ec"></div>
<div class="t " style="left:1958.7px;top:3165.6px;font-size:15.80px;font-weight:400;color:#6f6f6f;">10 Mar</div>
<div class="b" style="left:2110.1px;top:3152.0px;width:2.0px;height:13.0px;background:#cbd4ec"></div>
<div class="t " style="left:2087.5px;top:3165.6px;font-size:15.80px;font-weight:400;color:#6f6f6f;">12 Mar</div>
<div class="b" style="left:2238.9px;top:3152.0px;width:2.0px;height:13.0px;background:#cbd4ec"></div>
<div class="t " style="left:2216.3px;top:3165.6px;font-size:15.80px;font-weight:400;color:#6f6f6f;">14 Mar</div>
<div class="b" style="left:2367.7px;top:3152.0px;width:2.0px;height:13.0px;background:#cbd4ec"></div>
<div class="t " style="left:2345.1px;top:3165.6px;font-size:15.80px;font-weight:400;color:#6f6f6f;">16 Mar</div>
<div class="t " style="left:503.9px;top:2995.5px;font-size:16.30px;font-weight:400;color:#6f6f6f;">2</div>
<div class="t " style="left:503.9px;top:3069.4px;font-size:16.30px;font-weight:400;color:#6f6f6f;">1</div>
<div class="t " style="left:503.9px;top:3143.7px;font-size:16.30px;font-weight:400;color:#6f6f6f;">0</div>
<svg class="b" style="left:0;top:0" width="2561" height="3924" viewBox="0 0 2561 3924"><path d="M694.3 3077.5 H1080.7" stroke="#1b9db0" stroke-width="3.4" fill="none" stroke-linecap="round"/></svg>
<div class="t " style="left:445.7px;top:3267.0px;font-size:20.10px;font-weight:700;color:#161616;">Average ICA RTT</div>
<div class="b" style="left:616.0px;top:3264.0px;width:24.0px;height:24.0px;background:#a9a9a9;border-radius:50%"></div>
<div class="t " style="left:623.0px;top:3268.0px;font-size:16.50px;font-weight:700;color:#fff;">?</div>
<div class="b" style="left:535.0px;top:3330.2px;width:1950.3px;height:2.0px;background:#e3e3e3"></div>
<div class="b" style="left:535.0px;top:3404.9px;width:1950.3px;height:2.0px;background:#e3e3e3"></div>
<div class="b" style="left:535.0px;top:3478.8px;width:1950.3px;height:2.0px;background:#cbd4ec"></div>
<div class="b" style="left:564.5px;top:3479.8px;width:2.0px;height:13.0px;background:#cbd4ec"></div>
<div class="t " style="left:541.9px;top:3494.1px;font-size:15.80px;font-weight:400;color:#6f6f6f;">16 Feb</div>
<div class="b" style="left:693.3px;top:3479.8px;width:2.0px;height:13.0px;background:#cbd4ec"></div>
<div class="t " style="left:670.7px;top:3494.1px;font-size:15.80px;font-weight:400;color:#6f6f6f;">18 Feb</div>
<div class="b" style="left:822.1px;top:3479.8px;width:2.0px;height:13.0px;background:#cbd4ec"></div>
<div class="t " style="left:799.5px;top:3494.1px;font-size:15.80px;font-weight:400;color:#6f6f6f;">20 Feb</div>
<div class="b" style="left:950.9px;top:3479.8px;width:2.0px;height:13.0px;background:#cbd4ec"></div>
<div class="t " style="left:928.3px;top:3494.1px;font-size:15.80px;font-weight:400;color:#6f6f6f;">22 Feb</div>
<div class="b" style="left:1079.7px;top:3479.8px;width:2.0px;height:13.0px;background:#cbd4ec"></div>
<div class="t " style="left:1057.1px;top:3494.1px;font-size:15.80px;font-weight:400;color:#6f6f6f;">24 Feb</div>
<div class="b" style="left:1208.5px;top:3479.8px;width:2.0px;height:13.0px;background:#cbd4ec"></div>
<div class="t " style="left:1185.9px;top:3494.1px;font-size:15.80px;font-weight:400;color:#6f6f6f;">26 Feb</div>
<div class="b" style="left:1337.3px;top:3479.8px;width:2.0px;height:13.0px;background:#cbd4ec"></div>
<div class="t " style="left:1314.7px;top:3494.1px;font-size:15.80px;font-weight:400;color:#6f6f6f;">28 Feb</div>
<div class="b" style="left:1466.1px;top:3479.8px;width:2.0px;height:13.0px;background:#cbd4ec"></div>
<div class="t " style="left:1443.5px;top:3494.1px;font-size:15.80px;font-weight:400;color:#6f6f6f;">02 Mar</div>
<div class="b" style="left:1594.9px;top:3479.8px;width:2.0px;height:13.0px;background:#cbd4ec"></div>
<div class="t " style="left:1572.3px;top:3494.1px;font-size:15.80px;font-weight:400;color:#6f6f6f;">04 Mar</div>
<div class="b" style="left:1723.7px;top:3479.8px;width:2.0px;height:13.0px;background:#cbd4ec"></div>
<div class="t " style="left:1701.1px;top:3494.1px;font-size:15.80px;font-weight:400;color:#6f6f6f;">06 Mar</div>
<div class="b" style="left:1852.5px;top:3479.8px;width:2.0px;height:13.0px;background:#cbd4ec"></div>
<div class="t " style="left:1829.9px;top:3494.1px;font-size:15.80px;font-weight:400;color:#6f6f6f;">08 Mar</div>
<div class="b" style="left:1981.3px;top:3479.8px;width:2.0px;height:13.0px;background:#cbd4ec"></div>
<div class="t " style="left:1958.7px;top:3494.1px;font-size:15.80px;font-weight:400;color:#6f6f6f;">10 Mar</div>
<div class="b" style="left:2110.1px;top:3479.8px;width:2.0px;height:13.0px;background:#cbd4ec"></div>
<div class="t " style="left:2087.5px;top:3494.1px;font-size:15.80px;font-weight:400;color:#6f6f6f;">12 Mar</div>
<div class="b" style="left:2238.9px;top:3479.8px;width:2.0px;height:13.0px;background:#cbd4ec"></div>
<div class="t " style="left:2216.3px;top:3494.1px;font-size:15.80px;font-weight:400;color:#6f6f6f;">14 Mar</div>
<div class="b" style="left:2367.7px;top:3479.8px;width:2.0px;height:13.0px;background:#cbd4ec"></div>
<div class="t " style="left:2345.1px;top:3494.1px;font-size:15.80px;font-weight:400;color:#6f6f6f;">16 Mar</div>
<div class="t " style="left:468.0px;top:3322.9px;font-size:16.30px;font-weight:400;color:#6f6f6f;">20 ms</div>
<div class="t " style="left:468.0px;top:3397.6px;font-size:16.30px;font-weight:400;color:#6f6f6f;">10 ms</div>
<div class="t " style="left:477.1px;top:3471.5px;font-size:16.30px;font-weight:400;color:#6f6f6f;">0 ms</div>
<svg class="b" style="left:0;top:0" width="2561" height="3924" viewBox="0 0 2561 3924"><circle cx="694.3" cy="3361.2" r="4.2" fill="#b08a00"/><path d="M887.5 3471.7 H950.9" stroke="#b08a00" stroke-width="3.4" fill="none" stroke-linecap="round"/><circle cx="1080.7" cy="3471.7" r="4.2" fill="#b08a00"/></svg>
<div class="t " style="left:445.7px;top:3591.3px;font-size:19.99px;font-weight:700;color:#161616;">Average logon duration</div>
<div class="b" style="left:677.0px;top:3588.6px;width:24.0px;height:24.0px;background:#a9a9a9;border-radius:50%"></div>
<div class="t " style="left:684.0px;top:3592.6px;font-size:16.50px;font-weight:700;color:#fff;">?</div>
<div class="b" style="left:535.0px;top:3654.1px;width:1950.3px;height:2.0px;background:#e3e3e3"></div>
<div class="b" style="left:535.0px;top:3729.0px;width:1950.3px;height:2.0px;background:#e3e3e3"></div>
<div class="b" style="left:535.0px;top:3802.8px;width:1950.3px;height:2.0px;background:#cbd4ec"></div>
<div class="b" style="left:564.5px;top:3803.8px;width:2.0px;height:13.0px;background:#cbd4ec"></div>
<div class="t " style="left:541.9px;top:3818.1px;font-size:15.80px;font-weight:400;color:#6f6f6f;">16 Feb</div>
<div class="b" style="left:693.3px;top:3803.8px;width:2.0px;height:13.0px;background:#cbd4ec"></div>
<div class="t " style="left:670.7px;top:3818.1px;font-size:15.80px;font-weight:400;color:#6f6f6f;">18 Feb</div>
<div class="b" style="left:822.1px;top:3803.8px;width:2.0px;height:13.0px;background:#cbd4ec"></div>
<div class="t " style="left:799.5px;top:3818.1px;font-size:15.80px;font-weight:400;color:#6f6f6f;">20 Feb</div>
<div class="b" style="left:950.9px;top:3803.8px;width:2.0px;height:13.0px;background:#cbd4ec"></div>
<div class="t " style="left:928.3px;top:3818.1px;font-size:15.80px;font-weight:400;color:#6f6f6f;">22 Feb</div>
<div class="b" style="left:1079.7px;top:3803.8px;width:2.0px;height:13.0px;background:#cbd4ec"></div>
<div class="t " style="left:1057.1px;top:3818.1px;font-size:15.80px;font-weight:400;color:#6f6f6f;">24 Feb</div>
<div class="b" style="left:1208.5px;top:3803.8px;width:2.0px;height:13.0px;background:#cbd4ec"></div>
<div class="t " style="left:1185.9px;top:3818.1px;font-size:15.80px;font-weight:400;color:#6f6f6f;">26 Feb</div>
<div class="b" style="left:1337.3px;top:3803.8px;width:2.0px;height:13.0px;background:#cbd4ec"></div>
<div class="t " style="left:1314.7px;top:3818.1px;font-size:15.80px;font-weight:400;color:#6f6f6f;">28 Feb</div>
<div class="b" style="left:1466.1px;top:3803.8px;width:2.0px;height:13.0px;background:#cbd4ec"></div>
<div class="t " style="left:1443.5px;top:3818.1px;font-size:15.80px;font-weight:400;color:#6f6f6f;">02 Mar</div>
<div class="b" style="left:1594.9px;top:3803.8px;width:2.0px;height:13.0px;background:#cbd4ec"></div>
<div class="t " style="left:1572.3px;top:3818.1px;font-size:15.80px;font-weight:400;color:#6f6f6f;">04 Mar</div>
<div class="b" style="left:1723.7px;top:3803.8px;width:2.0px;height:13.0px;background:#cbd4ec"></div>
<div class="t " style="left:1701.1px;top:3818.1px;font-size:15.80px;font-weight:400;color:#6f6f6f;">06 Mar</div>
<div class="b" style="left:1852.5px;top:3803.8px;width:2.0px;height:13.0px;background:#cbd4ec"></div>
<div class="t " style="left:1829.9px;top:3818.1px;font-size:15.80px;font-weight:400;color:#6f6f6f;">08 Mar</div>
<div class="b" style="left:1981.3px;top:3803.8px;width:2.0px;height:13.0px;background:#cbd4ec"></div>
<div class="t " style="left:1958.7px;top:3818.1px;font-size:15.80px;font-weight:400;color:#6f6f6f;">10 Mar</div>
<div class="b" style="left:2110.1px;top:3803.8px;width:2.0px;height:13.0px;background:#cbd4ec"></div>
<div class="t " style="left:2087.5px;top:3818.1px;font-size:15.80px;font-weight:400;color:#6f6f6f;">12 Mar</div>
<div class="b" style="left:2238.9px;top:3803.8px;width:2.0px;height:13.0px;background:#cbd4ec"></div>
<div class="t " style="left:2216.3px;top:3818.1px;font-size:15.80px;font-weight:400;color:#6f6f6f;">14 Mar</div>
<div class="b" style="left:2367.7px;top:3803.8px;width:2.0px;height:13.0px;background:#cbd4ec"></div>
<div class="t " style="left:2345.1px;top:3818.1px;font-size:15.80px;font-weight:400;color:#6f6f6f;">16 Mar</div>
<div class="t " style="left:472.5px;top:3646.8px;font-size:16.30px;font-weight:400;color:#6f6f6f;">3 min</div>
<div class="t " style="left:472.5px;top:3721.7px;font-size:16.30px;font-weight:400;color:#6f6f6f;">1 min</div>
<div class="t " style="left:477.1px;top:3795.5px;font-size:16.30px;font-weight:400;color:#6f6f6f;">0 ms</div>
<svg class="b" style="left:0;top:0" width="2561" height="3924" viewBox="0 0 2561 3924"><circle cx="694.3" cy="3694.3" r="4.2" fill="#b070ee"/><path d="M887.5 3712.3 L950.9 3714" stroke="#b070ee" stroke-width="3.4" fill="none" stroke-linecap="round"/><circle cx="1080.7" cy="3697.5" r="4.2" fill="#b070ee"/></svg>
<div class="b" style="left:1130.0px;top:2205.6px;width:504.0px;height:504.2px;background:#fff;border-radius:8px;box-shadow:0 2px 18px rgba(0,0,0,0.16)"></div>
<div class="t " style="left:1154.5px;top:2231.9px;font-size:18.30px;font-weight:400;color:#6f6f6f;">Monday, Feb 24, 2025, 12:00 AM to Tuesday, Feb 25,</div>
<div class="t " style="left:1154.5px;top:2252.7px;font-size:18.30px;font-weight:400;color:#6f6f6f;">2025, 12:00 AM</div>
<div class="t " style="left:1154.5px;top:2300.1px;font-size:18.70px;font-weight:400;color:#161616;">Data for the machines ranked in the Top 5 percentile</div>
<div class="t " style="left:1154.5px;top:2320.9px;font-size:18.70px;font-weight:400;color:#161616;">by CPU usage</div>
<div class="t " style="left:1154.5px;top:2370.5px;font-size:17.60px;font-weight:700;color:#161616;">Infrastructure details</div>
<div class="b" style="left:1157.0px;top:2410.0px;width:18.0px;height:18.0px;background:#6690f5"></div>
<div class="t " style="left:1188.0px;top:2410.7px;font-size:18.60px;font-weight:400;color:#161616;">Range of CPU peaks</div>
<div class="t " style="left:1513.6px;top:2411.6px;font-size:17.45px;font-weight:700;color:#161616;">18% to 18%</div>
<div class="b" style="left:1154.0px;top:2459.5px;width:24.0px;height:3.0px;background:#b0369e"></div>
<div class="t " style="left:1188.0px;top:2452.3px;font-size:18.60px;font-weight:400;color:#161616;">Peak memory utilization</div>
<div class="t " style="left:1574.7px;top:2453.2px;font-size:17.45px;font-weight:700;color:#161616;">53%</div>
<div class="t " style="left:1154.5px;top:2492.3px;font-size:18.60px;font-weight:400;color:#161616;">Number of machines</div>
<div class="t " style="left:1599.9px;top:2493.2px;font-size:17.45px;font-weight:700;color:#161616;">1</div>
<div class="t " style="left:1154.5px;top:2541.4px;font-size:17.20px;font-weight:700;color:#161616;">Session metrics</div>
<div class="b" style="left:1154.0px;top:2589.3px;width:24.0px;height:3.0px;background:#1b9db0"></div>
<div class="t " style="left:1188.0px;top:2581.1px;font-size:18.60px;font-weight:400;color:#161616;">Average session density</div>
<div class="t " style="left:1599.9px;top:2582.0px;font-size:17.45px;font-weight:700;color:#161616;">1</div>
<div class="b" style="left:1154.0px;top:2631.0px;width:24.0px;height:3.0px;background:#b08a00"></div>
<div class="t " style="left:1188.0px;top:2622.8px;font-size:18.60px;font-weight:400;color:#161616;">Average ICA RTT</div>
<div class="t " style="left:1569.8px;top:2623.7px;font-size:17.45px;font-weight:700;color:#161616;">1 ms</div>
<div class="b" style="left:1154.0px;top:2673.5px;width:24.0px;height:3.0px;background:#b070ee"></div>
<div class="t " style="left:1188.0px;top:2665.3px;font-size:18.60px;font-weight:400;color:#161616;">Average logon duration</div>
<div class="t " style="left:1505.8px;top:2666.2px;font-size:17.45px;font-weight:700;color:#161616;">2 min 23 sec</div>
</body></html>
